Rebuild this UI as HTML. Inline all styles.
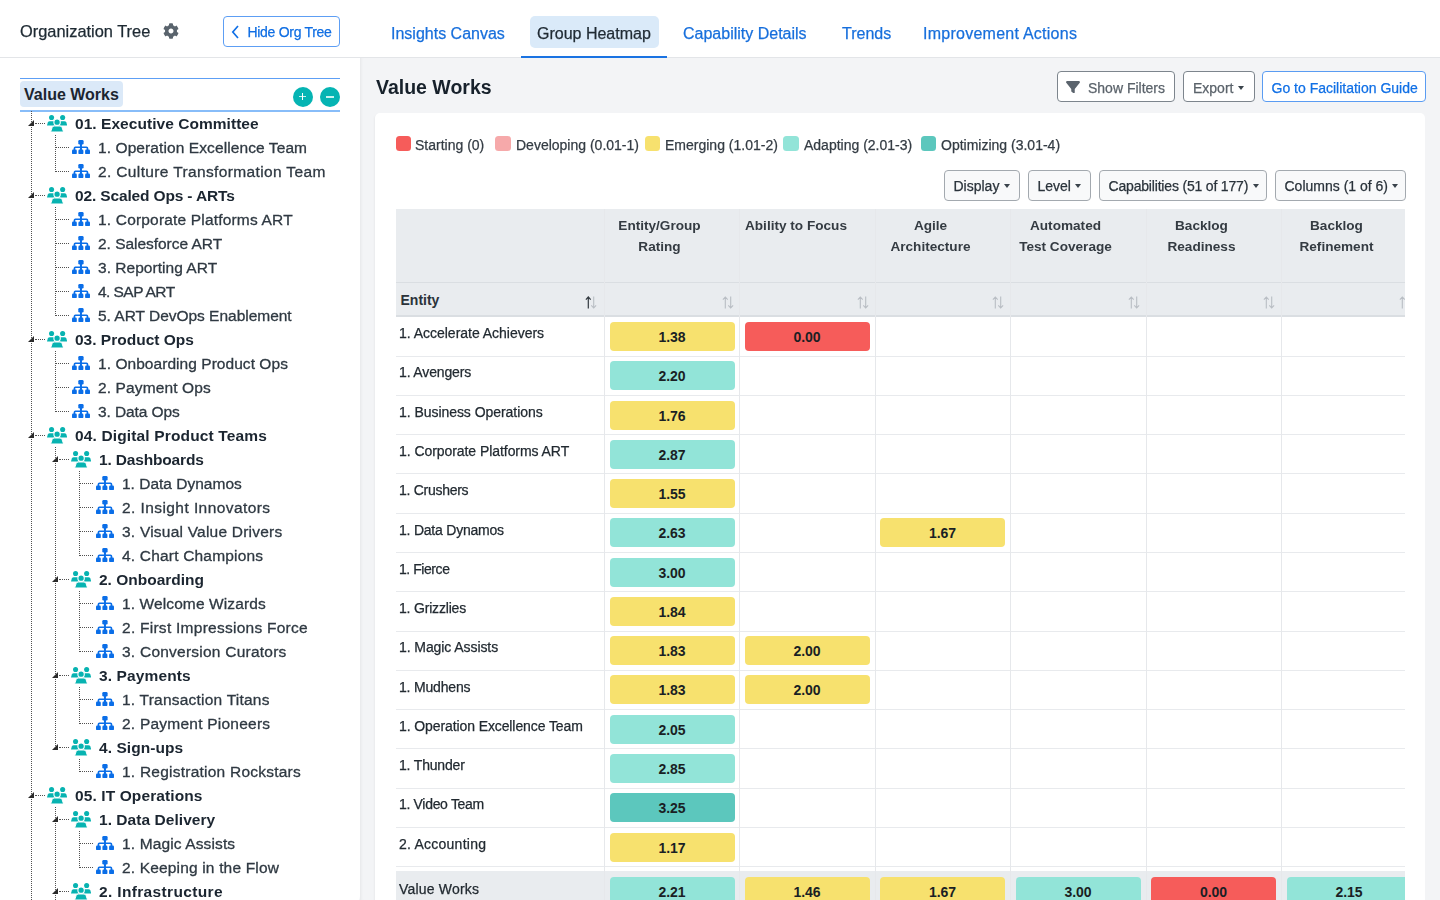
<!DOCTYPE html>
<html><head><meta charset="utf-8"><style>
*{box-sizing:border-box;margin:0;padding:0}
html,body{width:1440px;height:900px;overflow:hidden;background:#f3f4f6;font-family:"Liberation Sans", sans-serif;}
.abs{position:absolute}
#side{position:absolute;left:0;top:0;width:360px;height:903px;background:#fff;border-bottom-right-radius:7px;overflow:hidden}
#nav{position:absolute;left:360px;top:0;width:1080px;height:58px;background:#fff;border-bottom:1px solid #e3e5e8}
#sidehdr{position:absolute;left:0;top:0;width:360px;height:58px;border-bottom:1px solid #e3e5e8}
.ot{position:absolute;-webkit-text-stroke-width:0.25px;will-change:transform;left:20px;top:21px;font-size:16.4px;line-height:20px;color:#1e2a33;white-space:nowrap}
.hidebtn{position:absolute;will-change:transform;-webkit-text-stroke-width:0.25px;left:223px;top:16px;width:117px;height:30.5px;border:1px solid #5d9ef4;border-radius:4px;color:#0f6ee3;font-size:14px;letter-spacing:-0.3px;line-height:30px;padding-left:23.5px;white-space:nowrap}
.vl{position:absolute;width:1px;border-left:1px dotted #505050}
.hl{position:absolute;height:1px;border-top:1px dotted #505050}
.tri{position:absolute;width:0;height:0;border-left:6px solid transparent;border-bottom:6px solid #2a2a2a}
.icon{position:absolute;line-height:0}
.tt{position:absolute;white-space:nowrap;line-height:24px;will-change:transform}
.tt.b{font-weight:700;font-size:15.5px;color:#1b2530}
.tt.r{font-weight:400;font-size:15.5px;color:#2f3942;-webkit-text-stroke-width:0.3px}
.tab{position:absolute;-webkit-text-stroke-width:0.25px;will-change:transform;top:17.5px;height:31px;line-height:31px;font-size:16px;color:#176fdc;white-space:nowrap}
#main{position:absolute;left:360px;top:58px;width:1080px;height:842px;background:#f3f4f6;box-shadow:inset 3px 0 3px -2px rgba(0,0,0,0.06)}
.h1{position:absolute;will-change:transform;left:375.5px;top:75px;font-size:19.5px;font-weight:700;color:#17212b;line-height:24px;white-space:nowrap}
.btn{position:absolute;will-change:transform;-webkit-text-stroke-width:0.25px;height:31px;border:1px solid #7d858d;border-radius:4px;background:#fff;color:#5b636b;font-size:14px;line-height:32px;white-space:nowrap}
.btn2{position:absolute;will-change:transform;-webkit-text-stroke-width:0.25px;top:170px;height:30.5px;border:1px solid #a3a9af;border-radius:4px;background:#f8f9fa;color:#2a333b;font-size:14px;line-height:31.5px;white-space:nowrap;padding-left:8.5px}
.caret{display:inline-block;width:0;height:0;border-left:3.6px solid transparent;border-right:3.6px solid transparent;border-top:4.2px solid #3a434b;vertical-align:3px;margin-left:4.5px}
#card{position:absolute;left:375px;top:113.3px;width:1050px;height:800px;background:#fff;border-radius:5px;box-shadow:-1px 1px 2px rgba(0,0,0,0.04)}
.sw{position:absolute;top:135.5px;width:15.5px;height:15.5px;border-radius:3.5px}
.lg{position:absolute;-webkit-text-stroke-width:0.25px;will-change:transform;top:135px;font-size:14px;line-height:20px;color:#343c44;white-space:nowrap}
#tbl{position:absolute;left:395.5px;top:209px;width:1009.5px;height:691px;overflow:hidden;background:#fff}
.hbg{position:absolute;left:0;top:0;width:1100px;height:108px;background:#e9ecef}
.hb1{position:absolute;left:0;top:73px;width:1100px;height:1.2px;background:#dadee2}
.hb2{position:absolute;left:0;top:106px;width:1100px;height:2px;background:#dadee2}
.trow{position:absolute;left:0;width:1100px;border-bottom:1px solid #e8eaed}
.frow{position:absolute;left:0;width:1100px;height:40px;background:#e9ecef}
.cl{position:absolute;top:0;width:1px;height:700px;background:#e6e8eb}
.ent{position:absolute;-webkit-text-stroke-width:0.25px;will-change:transform;left:3.8px;font-size:14px;line-height:20px;color:#222a31;white-space:nowrap}
.badge{position:absolute;width:125px;height:29px;border-radius:4px;text-align:center;font-weight:700;font-size:14px;line-height:30px;color:#1a1f24}
.badge.y{background:#f7e16e} .badge.r{background:#f65c5a} .badge.t{background:#92e4d8} .badge.d{background:#5cc7bd} .badge.p{background:#f6a9aa}
.hd{position:absolute;will-change:transform;top:6px;width:99px;white-space:nowrap;text-align:center;font-weight:700;font-size:13.6px;line-height:21px;color:#343b42}
.sort{position:absolute;top:87px;line-height:0}
</style></head><body>
<div id="main"></div>
<div id="nav"></div>
<div id="side">
 <div id="sidehdr"></div>
 <div class="ot">Organization Tree</div>
 <div class="abs" style="left:163px;top:22.8px;line-height:0"><svg width="16" height="16" viewBox="0 0 512 512"><path fill="#5a646d" d="M487.4 315.7l-42.6-24.6c4.3-23.2 4.3-47 0-70.2l42.6-24.6c4.9-2.8 7.1-8.6 5.5-14-11.1-35.6-30-67.8-54.7-94.6-3.8-4.1-10-5.1-14.8-2.3L380.8 110c-17.9-15.4-38.5-27.3-60.8-35.1V25.8c0-5.6-3.9-10.5-9.4-11.7-36.7-8.2-74.3-7.8-109.2 0-5.5 1.2-9.4 6.1-9.4 11.7V75c-22.2 7.9-42.8 19.8-60.8 35.1L88.7 85.5c-4.9-2.8-11-1.9-14.8 2.3-24.7 26.7-43.6 58.9-54.7 94.6-1.7 5.4.6 11.2 5.5 14L67.3 221c-4.3 23.2-4.3 47 0 70.2l-42.6 24.6c-4.9 2.8-7.1 8.6-5.5 14 11.1 35.6 30 67.8 54.7 94.6 3.8 4.1 10 5.1 14.8 2.3l42.6-24.6c17.9 15.4 38.5 27.3 60.8 35.1v49.2c0 5.6 3.9 10.5 9.4 11.7 36.7 8.2 74.3 7.8 109.2 0 5.5-1.2 9.4-6.1 9.4-11.7v-49.2c22.2-7.9 42.8-19.8 60.8-35.1l42.6 24.6c4.9 2.8 11 1.9 14.8-2.3 24.7-26.7 43.6-58.9 54.7-94.6 1.5-5.5-.7-11.3-5.6-14.1zM256 336c-44.1 0-80-35.9-80-80s35.9-80 80-80 80 35.9 80 80-35.9 80-80 80z"/></svg></div>
 <div class="hidebtn"><svg class="abs" style="left:7px;top:8px" width="9" height="14" viewBox="0 0 9 14"><path d="M7 1 L1.8 7 L7 13" stroke="#1170e6" stroke-width="1.7" fill="none"/></svg>Hide Org Tree</div>
 <div class="abs" style="left:20px;top:77.5px;width:320px;height:1.5px;background:#5d9ff5"></div>
 <div class="abs" style="left:20px;top:110px;width:320px;height:1.6px;background:#88bdf9"></div>
 <div class="abs" style="left:20px;top:81px;width:103px;height:26px;background:#dbe9f8;border-radius:4px"></div>
 <div class="abs" style="left:24px;top:83px;font-size:16px;font-weight:700;line-height:24px;color:#1b2530;white-space:nowrap">Value Works</div>
 <div class="abs" style="left:292.7px;top:86.5px;width:20px;height:20px;border-radius:50%;background:#05b4b3"><div class="abs" style="left:6.2px;top:9.1px;width:7px;height:1.5px;background:#c8f2ef"></div><div class="abs" style="left:9.5px;top:6.7px;width:1.3px;height:6.6px;background:#fff"></div></div>
 <div class="abs" style="left:320px;top:86.5px;width:20px;height:20px;border-radius:50%;background:#05b4b3"><div class="abs" style="left:6.3px;top:9.2px;width:7.4px;height:2px;background:#c8f2ef"></div></div>
<div class="vl" style="left:55px;top:135.0px;height:37.0px"></div>
<div class="vl" style="left:55px;top:207.0px;height:109.0px"></div>
<div class="vl" style="left:55px;top:351.0px;height:61.0px"></div>
<div class="vl" style="left:55px;top:447.0px;height:301.0px"></div>
<div class="vl" style="left:79px;top:471.0px;height:85.0px"></div>
<div class="vl" style="left:79px;top:591.0px;height:61.0px"></div>
<div class="vl" style="left:79px;top:687.0px;height:37.0px"></div>
<div class="vl" style="left:79px;top:759.0px;height:13.0px"></div>
<div class="vl" style="left:55px;top:807.0px;height:133.0px"></div>
<div class="vl" style="left:79px;top:831.0px;height:37.0px"></div>
<div class="vl" style="left:79px;top:903.0px;height:13.0px"></div>
<div class="vl" style="left:79px;top:951.0px;height:13.0px"></div>
<div class="vl" style="left:31px;top:111px;height:789px"></div>
<div class="tri" style="left:28px;top:120.0px"></div>
<div class="hl" style="left:34.5px;top:123.0px;width:10.0px"></div>
<div class="icon" style="left:46.9px;top:115.2px"><svg class="ti" width="20.2" height="16.5" viewBox="0 0 20.2 16.5"><g fill="#07b3b1"><circle cx="4.56" cy="2.55" r="2.55"/><circle cx="15.65" cy="2.55" r="2.55"/><path d="M0 10.4 L0.8 7.6 Q1.3 6.2 2.8 6.2 H6.2 Q7.4 6.2 7.8 7.4 L8.6 10.4Z"/><path d="M11.6 10.4 L12.4 7.4 Q12.8 6.2 14 6.2 H17.4 Q18.9 6.2 19.4 7.6 L20.2 10.4Z"/></g><g fill="#07b3b1" stroke="#fff" stroke-width="1.1"><circle cx="10.1" cy="7.2" r="3.2"/></g><path fill="#07b3b1" stroke="#fff" stroke-width="1" d="M3.6 17 L5.1 12.6 Q5.6 11 7.2 11 H13 Q14.6 11 15.1 12.6 L16.6 17Z"/></svg></div>
<div class="tt b" style="left:74.5px;top:111.5px;letter-spacing:0.045px">01. Executive Committee</div>
<div class="hl" style="left:56px;top:147.0px;width:12.5px"></div>
<div class="icon" style="left:72px;top:140.3px"><svg class="oi" width="18" height="14.2" viewBox="0 0 18 14.2"><g fill="#0a6ee8"><rect x="6.3" y="0" width="5.3" height="4.6" rx="1.3"/><rect x="7.95" y="3.5" width="2" height="7"/><path d="M1.6 10 V8.2 Q1.6 6.4 3.4 6.4 H14.5 Q16.3 6.4 16.3 8.2 V10 H14.7 V8.6 Q14.7 8 14.1 8 H3.8 Q3.2 8 3.2 8.6 V10Z"/><rect x="0" y="9.6" width="4.8" height="4.6" rx="1.3"/><rect x="6.4" y="9.6" width="5" height="4.6" rx="1.3"/><rect x="13.1" y="9.6" width="4.9" height="4.6" rx="1.3"/></g></svg></div>
<div class="tt r" style="left:98px;top:135.5px;letter-spacing:0.093px">1. Operation Excellence Team</div>
<div class="hl" style="left:56px;top:171.0px;width:12.5px"></div>
<div class="icon" style="left:72px;top:164.3px"><svg class="oi" width="18" height="14.2" viewBox="0 0 18 14.2"><g fill="#0a6ee8"><rect x="6.3" y="0" width="5.3" height="4.6" rx="1.3"/><rect x="7.95" y="3.5" width="2" height="7"/><path d="M1.6 10 V8.2 Q1.6 6.4 3.4 6.4 H14.5 Q16.3 6.4 16.3 8.2 V10 H14.7 V8.6 Q14.7 8 14.1 8 H3.8 Q3.2 8 3.2 8.6 V10Z"/><rect x="0" y="9.6" width="4.8" height="4.6" rx="1.3"/><rect x="6.4" y="9.6" width="5" height="4.6" rx="1.3"/><rect x="13.1" y="9.6" width="4.9" height="4.6" rx="1.3"/></g></svg></div>
<div class="tt r" style="left:98px;top:159.5px;letter-spacing:0.362px">2. Culture Transformation Team</div>
<div class="tri" style="left:28px;top:192.0px"></div>
<div class="hl" style="left:34.5px;top:195.0px;width:10.0px"></div>
<div class="icon" style="left:46.9px;top:187.2px"><svg class="ti" width="20.2" height="16.5" viewBox="0 0 20.2 16.5"><g fill="#07b3b1"><circle cx="4.56" cy="2.55" r="2.55"/><circle cx="15.65" cy="2.55" r="2.55"/><path d="M0 10.4 L0.8 7.6 Q1.3 6.2 2.8 6.2 H6.2 Q7.4 6.2 7.8 7.4 L8.6 10.4Z"/><path d="M11.6 10.4 L12.4 7.4 Q12.8 6.2 14 6.2 H17.4 Q18.9 6.2 19.4 7.6 L20.2 10.4Z"/></g><g fill="#07b3b1" stroke="#fff" stroke-width="1.1"><circle cx="10.1" cy="7.2" r="3.2"/></g><path fill="#07b3b1" stroke="#fff" stroke-width="1" d="M3.6 17 L5.1 12.6 Q5.6 11 7.2 11 H13 Q14.6 11 15.1 12.6 L16.6 17Z"/></svg></div>
<div class="tt b" style="left:74.5px;top:183.5px;letter-spacing:-0.15px">02. Scaled Ops - ARTs</div>
<div class="hl" style="left:56px;top:219.0px;width:12.5px"></div>
<div class="icon" style="left:72px;top:212.3px"><svg class="oi" width="18" height="14.2" viewBox="0 0 18 14.2"><g fill="#0a6ee8"><rect x="6.3" y="0" width="5.3" height="4.6" rx="1.3"/><rect x="7.95" y="3.5" width="2" height="7"/><path d="M1.6 10 V8.2 Q1.6 6.4 3.4 6.4 H14.5 Q16.3 6.4 16.3 8.2 V10 H14.7 V8.6 Q14.7 8 14.1 8 H3.8 Q3.2 8 3.2 8.6 V10Z"/><rect x="0" y="9.6" width="4.8" height="4.6" rx="1.3"/><rect x="6.4" y="9.6" width="5" height="4.6" rx="1.3"/><rect x="13.1" y="9.6" width="4.9" height="4.6" rx="1.3"/></g></svg></div>
<div class="tt r" style="left:98px;top:207.5px;letter-spacing:0.18px">1. Corporate Platforms ART</div>
<div class="hl" style="left:56px;top:243.0px;width:12.5px"></div>
<div class="icon" style="left:72px;top:236.3px"><svg class="oi" width="18" height="14.2" viewBox="0 0 18 14.2"><g fill="#0a6ee8"><rect x="6.3" y="0" width="5.3" height="4.6" rx="1.3"/><rect x="7.95" y="3.5" width="2" height="7"/><path d="M1.6 10 V8.2 Q1.6 6.4 3.4 6.4 H14.5 Q16.3 6.4 16.3 8.2 V10 H14.7 V8.6 Q14.7 8 14.1 8 H3.8 Q3.2 8 3.2 8.6 V10Z"/><rect x="0" y="9.6" width="4.8" height="4.6" rx="1.3"/><rect x="6.4" y="9.6" width="5" height="4.6" rx="1.3"/><rect x="13.1" y="9.6" width="4.9" height="4.6" rx="1.3"/></g></svg></div>
<div class="tt r" style="left:98px;top:231.5px;letter-spacing:-0.031px">2. Salesforce ART</div>
<div class="hl" style="left:56px;top:267.0px;width:12.5px"></div>
<div class="icon" style="left:72px;top:260.3px"><svg class="oi" width="18" height="14.2" viewBox="0 0 18 14.2"><g fill="#0a6ee8"><rect x="6.3" y="0" width="5.3" height="4.6" rx="1.3"/><rect x="7.95" y="3.5" width="2" height="7"/><path d="M1.6 10 V8.2 Q1.6 6.4 3.4 6.4 H14.5 Q16.3 6.4 16.3 8.2 V10 H14.7 V8.6 Q14.7 8 14.1 8 H3.8 Q3.2 8 3.2 8.6 V10Z"/><rect x="0" y="9.6" width="4.8" height="4.6" rx="1.3"/><rect x="6.4" y="9.6" width="5" height="4.6" rx="1.3"/><rect x="13.1" y="9.6" width="4.9" height="4.6" rx="1.3"/></g></svg></div>
<div class="tt r" style="left:98px;top:255.5px;letter-spacing:0.033px">3. Reporting ART</div>
<div class="hl" style="left:56px;top:291.0px;width:12.5px"></div>
<div class="icon" style="left:72px;top:284.3px"><svg class="oi" width="18" height="14.2" viewBox="0 0 18 14.2"><g fill="#0a6ee8"><rect x="6.3" y="0" width="5.3" height="4.6" rx="1.3"/><rect x="7.95" y="3.5" width="2" height="7"/><path d="M1.6 10 V8.2 Q1.6 6.4 3.4 6.4 H14.5 Q16.3 6.4 16.3 8.2 V10 H14.7 V8.6 Q14.7 8 14.1 8 H3.8 Q3.2 8 3.2 8.6 V10Z"/><rect x="0" y="9.6" width="4.8" height="4.6" rx="1.3"/><rect x="6.4" y="9.6" width="5" height="4.6" rx="1.3"/><rect x="13.1" y="9.6" width="4.9" height="4.6" rx="1.3"/></g></svg></div>
<div class="tt r" style="left:98px;top:279.5px;letter-spacing:-0.556px">4. SAP ART</div>
<div class="hl" style="left:56px;top:315.0px;width:12.5px"></div>
<div class="icon" style="left:72px;top:308.3px"><svg class="oi" width="18" height="14.2" viewBox="0 0 18 14.2"><g fill="#0a6ee8"><rect x="6.3" y="0" width="5.3" height="4.6" rx="1.3"/><rect x="7.95" y="3.5" width="2" height="7"/><path d="M1.6 10 V8.2 Q1.6 6.4 3.4 6.4 H14.5 Q16.3 6.4 16.3 8.2 V10 H14.7 V8.6 Q14.7 8 14.1 8 H3.8 Q3.2 8 3.2 8.6 V10Z"/><rect x="0" y="9.6" width="4.8" height="4.6" rx="1.3"/><rect x="6.4" y="9.6" width="5" height="4.6" rx="1.3"/><rect x="13.1" y="9.6" width="4.9" height="4.6" rx="1.3"/></g></svg></div>
<div class="tt r" style="left:98px;top:303.5px;letter-spacing:-0.022px">5. ART DevOps Enablement</div>
<div class="tri" style="left:28px;top:336.0px"></div>
<div class="hl" style="left:34.5px;top:339.0px;width:10.0px"></div>
<div class="icon" style="left:46.9px;top:331.2px"><svg class="ti" width="20.2" height="16.5" viewBox="0 0 20.2 16.5"><g fill="#07b3b1"><circle cx="4.56" cy="2.55" r="2.55"/><circle cx="15.65" cy="2.55" r="2.55"/><path d="M0 10.4 L0.8 7.6 Q1.3 6.2 2.8 6.2 H6.2 Q7.4 6.2 7.8 7.4 L8.6 10.4Z"/><path d="M11.6 10.4 L12.4 7.4 Q12.8 6.2 14 6.2 H17.4 Q18.9 6.2 19.4 7.6 L20.2 10.4Z"/></g><g fill="#07b3b1" stroke="#fff" stroke-width="1.1"><circle cx="10.1" cy="7.2" r="3.2"/></g><path fill="#07b3b1" stroke="#fff" stroke-width="1" d="M3.6 17 L5.1 12.6 Q5.6 11 7.2 11 H13 Q14.6 11 15.1 12.6 L16.6 17Z"/></svg></div>
<div class="tt b" style="left:74.5px;top:327.5px;letter-spacing:0.0px">03. Product Ops</div>
<div class="hl" style="left:56px;top:363.0px;width:12.5px"></div>
<div class="icon" style="left:72px;top:356.3px"><svg class="oi" width="18" height="14.2" viewBox="0 0 18 14.2"><g fill="#0a6ee8"><rect x="6.3" y="0" width="5.3" height="4.6" rx="1.3"/><rect x="7.95" y="3.5" width="2" height="7"/><path d="M1.6 10 V8.2 Q1.6 6.4 3.4 6.4 H14.5 Q16.3 6.4 16.3 8.2 V10 H14.7 V8.6 Q14.7 8 14.1 8 H3.8 Q3.2 8 3.2 8.6 V10Z"/><rect x="0" y="9.6" width="4.8" height="4.6" rx="1.3"/><rect x="6.4" y="9.6" width="5" height="4.6" rx="1.3"/><rect x="13.1" y="9.6" width="4.9" height="4.6" rx="1.3"/></g></svg></div>
<div class="tt r" style="left:98px;top:351.5px;letter-spacing:0.05px">1. Onboarding Product Ops</div>
<div class="hl" style="left:56px;top:387.0px;width:12.5px"></div>
<div class="icon" style="left:72px;top:380.3px"><svg class="oi" width="18" height="14.2" viewBox="0 0 18 14.2"><g fill="#0a6ee8"><rect x="6.3" y="0" width="5.3" height="4.6" rx="1.3"/><rect x="7.95" y="3.5" width="2" height="7"/><path d="M1.6 10 V8.2 Q1.6 6.4 3.4 6.4 H14.5 Q16.3 6.4 16.3 8.2 V10 H14.7 V8.6 Q14.7 8 14.1 8 H3.8 Q3.2 8 3.2 8.6 V10Z"/><rect x="0" y="9.6" width="4.8" height="4.6" rx="1.3"/><rect x="6.4" y="9.6" width="5" height="4.6" rx="1.3"/><rect x="13.1" y="9.6" width="4.9" height="4.6" rx="1.3"/></g></svg></div>
<div class="tt r" style="left:98px;top:375.5px;letter-spacing:0.115px">2. Payment Ops</div>
<div class="hl" style="left:56px;top:411.0px;width:12.5px"></div>
<div class="icon" style="left:72px;top:404.3px"><svg class="oi" width="18" height="14.2" viewBox="0 0 18 14.2"><g fill="#0a6ee8"><rect x="6.3" y="0" width="5.3" height="4.6" rx="1.3"/><rect x="7.95" y="3.5" width="2" height="7"/><path d="M1.6 10 V8.2 Q1.6 6.4 3.4 6.4 H14.5 Q16.3 6.4 16.3 8.2 V10 H14.7 V8.6 Q14.7 8 14.1 8 H3.8 Q3.2 8 3.2 8.6 V10Z"/><rect x="0" y="9.6" width="4.8" height="4.6" rx="1.3"/><rect x="6.4" y="9.6" width="5" height="4.6" rx="1.3"/><rect x="13.1" y="9.6" width="4.9" height="4.6" rx="1.3"/></g></svg></div>
<div class="tt r" style="left:98px;top:399.5px;letter-spacing:-0.1px">3. Data Ops</div>
<div class="tri" style="left:28px;top:432.0px"></div>
<div class="hl" style="left:34.5px;top:435.0px;width:10.0px"></div>
<div class="icon" style="left:46.9px;top:427.2px"><svg class="ti" width="20.2" height="16.5" viewBox="0 0 20.2 16.5"><g fill="#07b3b1"><circle cx="4.56" cy="2.55" r="2.55"/><circle cx="15.65" cy="2.55" r="2.55"/><path d="M0 10.4 L0.8 7.6 Q1.3 6.2 2.8 6.2 H6.2 Q7.4 6.2 7.8 7.4 L8.6 10.4Z"/><path d="M11.6 10.4 L12.4 7.4 Q12.8 6.2 14 6.2 H17.4 Q18.9 6.2 19.4 7.6 L20.2 10.4Z"/></g><g fill="#07b3b1" stroke="#fff" stroke-width="1.1"><circle cx="10.1" cy="7.2" r="3.2"/></g><path fill="#07b3b1" stroke="#fff" stroke-width="1" d="M3.6 17 L5.1 12.6 Q5.6 11 7.2 11 H13 Q14.6 11 15.1 12.6 L16.6 17Z"/></svg></div>
<div class="tt b" style="left:74.5px;top:423.5px;letter-spacing:0.146px">04. Digital Product Teams</div>
<div class="tri" style="left:52px;top:456.0px"></div>
<div class="hl" style="left:58.5px;top:459.0px;width:10.0px"></div>
<div class="icon" style="left:70.9px;top:451.2px"><svg class="ti" width="20.2" height="16.5" viewBox="0 0 20.2 16.5"><g fill="#07b3b1"><circle cx="4.56" cy="2.55" r="2.55"/><circle cx="15.65" cy="2.55" r="2.55"/><path d="M0 10.4 L0.8 7.6 Q1.3 6.2 2.8 6.2 H6.2 Q7.4 6.2 7.8 7.4 L8.6 10.4Z"/><path d="M11.6 10.4 L12.4 7.4 Q12.8 6.2 14 6.2 H17.4 Q18.9 6.2 19.4 7.6 L20.2 10.4Z"/></g><g fill="#07b3b1" stroke="#fff" stroke-width="1.1"><circle cx="10.1" cy="7.2" r="3.2"/></g><path fill="#07b3b1" stroke="#fff" stroke-width="1" d="M3.6 17 L5.1 12.6 Q5.6 11 7.2 11 H13 Q14.6 11 15.1 12.6 L16.6 17Z"/></svg></div>
<div class="tt b" style="left:98.5px;top:447.5px;letter-spacing:-0.167px">1. Dashboards</div>
<div class="hl" style="left:80px;top:483.0px;width:12.5px"></div>
<div class="icon" style="left:96px;top:476.3px"><svg class="oi" width="18" height="14.2" viewBox="0 0 18 14.2"><g fill="#0a6ee8"><rect x="6.3" y="0" width="5.3" height="4.6" rx="1.3"/><rect x="7.95" y="3.5" width="2" height="7"/><path d="M1.6 10 V8.2 Q1.6 6.4 3.4 6.4 H14.5 Q16.3 6.4 16.3 8.2 V10 H14.7 V8.6 Q14.7 8 14.1 8 H3.8 Q3.2 8 3.2 8.6 V10Z"/><rect x="0" y="9.6" width="4.8" height="4.6" rx="1.3"/><rect x="6.4" y="9.6" width="5" height="4.6" rx="1.3"/><rect x="13.1" y="9.6" width="4.9" height="4.6" rx="1.3"/></g></svg></div>
<div class="tt r" style="left:122px;top:471.5px;letter-spacing:0.0px">1. Data Dynamos</div>
<div class="hl" style="left:80px;top:507.0px;width:12.5px"></div>
<div class="icon" style="left:96px;top:500.3px"><svg class="oi" width="18" height="14.2" viewBox="0 0 18 14.2"><g fill="#0a6ee8"><rect x="6.3" y="0" width="5.3" height="4.6" rx="1.3"/><rect x="7.95" y="3.5" width="2" height="7"/><path d="M1.6 10 V8.2 Q1.6 6.4 3.4 6.4 H14.5 Q16.3 6.4 16.3 8.2 V10 H14.7 V8.6 Q14.7 8 14.1 8 H3.8 Q3.2 8 3.2 8.6 V10Z"/><rect x="0" y="9.6" width="4.8" height="4.6" rx="1.3"/><rect x="6.4" y="9.6" width="5" height="4.6" rx="1.3"/><rect x="13.1" y="9.6" width="4.9" height="4.6" rx="1.3"/></g></svg></div>
<div class="tt r" style="left:122px;top:495.5px;letter-spacing:0.425px">2. Insight Innovators</div>
<div class="hl" style="left:80px;top:531.0px;width:12.5px"></div>
<div class="icon" style="left:96px;top:524.3px"><svg class="oi" width="18" height="14.2" viewBox="0 0 18 14.2"><g fill="#0a6ee8"><rect x="6.3" y="0" width="5.3" height="4.6" rx="1.3"/><rect x="7.95" y="3.5" width="2" height="7"/><path d="M1.6 10 V8.2 Q1.6 6.4 3.4 6.4 H14.5 Q16.3 6.4 16.3 8.2 V10 H14.7 V8.6 Q14.7 8 14.1 8 H3.8 Q3.2 8 3.2 8.6 V10Z"/><rect x="0" y="9.6" width="4.8" height="4.6" rx="1.3"/><rect x="6.4" y="9.6" width="5" height="4.6" rx="1.3"/><rect x="13.1" y="9.6" width="4.9" height="4.6" rx="1.3"/></g></svg></div>
<div class="tt r" style="left:122px;top:519.5px;letter-spacing:0.218px">3. Visual Value Drivers</div>
<div class="hl" style="left:80px;top:555.0px;width:12.5px"></div>
<div class="icon" style="left:96px;top:548.3px"><svg class="oi" width="18" height="14.2" viewBox="0 0 18 14.2"><g fill="#0a6ee8"><rect x="6.3" y="0" width="5.3" height="4.6" rx="1.3"/><rect x="7.95" y="3.5" width="2" height="7"/><path d="M1.6 10 V8.2 Q1.6 6.4 3.4 6.4 H14.5 Q16.3 6.4 16.3 8.2 V10 H14.7 V8.6 Q14.7 8 14.1 8 H3.8 Q3.2 8 3.2 8.6 V10Z"/><rect x="0" y="9.6" width="4.8" height="4.6" rx="1.3"/><rect x="6.4" y="9.6" width="5" height="4.6" rx="1.3"/><rect x="13.1" y="9.6" width="4.9" height="4.6" rx="1.3"/></g></svg></div>
<div class="tt r" style="left:122px;top:543.5px;letter-spacing:0.188px">4. Chart Champions</div>
<div class="tri" style="left:52px;top:576.0px"></div>
<div class="hl" style="left:58.5px;top:579.0px;width:10.0px"></div>
<div class="icon" style="left:70.9px;top:571.2px"><svg class="ti" width="20.2" height="16.5" viewBox="0 0 20.2 16.5"><g fill="#07b3b1"><circle cx="4.56" cy="2.55" r="2.55"/><circle cx="15.65" cy="2.55" r="2.55"/><path d="M0 10.4 L0.8 7.6 Q1.3 6.2 2.8 6.2 H6.2 Q7.4 6.2 7.8 7.4 L8.6 10.4Z"/><path d="M11.6 10.4 L12.4 7.4 Q12.8 6.2 14 6.2 H17.4 Q18.9 6.2 19.4 7.6 L20.2 10.4Z"/></g><g fill="#07b3b1" stroke="#fff" stroke-width="1.1"><circle cx="10.1" cy="7.2" r="3.2"/></g><path fill="#07b3b1" stroke="#fff" stroke-width="1" d="M3.6 17 L5.1 12.6 Q5.6 11 7.2 11 H13 Q14.6 11 15.1 12.6 L16.6 17Z"/></svg></div>
<div class="tt b" style="left:98.5px;top:567.5px;letter-spacing:0.0px">2. Onboarding</div>
<div class="hl" style="left:80px;top:603.0px;width:12.5px"></div>
<div class="icon" style="left:96px;top:596.3px"><svg class="oi" width="18" height="14.2" viewBox="0 0 18 14.2"><g fill="#0a6ee8"><rect x="6.3" y="0" width="5.3" height="4.6" rx="1.3"/><rect x="7.95" y="3.5" width="2" height="7"/><path d="M1.6 10 V8.2 Q1.6 6.4 3.4 6.4 H14.5 Q16.3 6.4 16.3 8.2 V10 H14.7 V8.6 Q14.7 8 14.1 8 H3.8 Q3.2 8 3.2 8.6 V10Z"/><rect x="0" y="9.6" width="4.8" height="4.6" rx="1.3"/><rect x="6.4" y="9.6" width="5" height="4.6" rx="1.3"/><rect x="13.1" y="9.6" width="4.9" height="4.6" rx="1.3"/></g></svg></div>
<div class="tt r" style="left:122px;top:591.5px;letter-spacing:0.106px">1. Welcome Wizards</div>
<div class="hl" style="left:80px;top:627.0px;width:12.5px"></div>
<div class="icon" style="left:96px;top:620.3px"><svg class="oi" width="18" height="14.2" viewBox="0 0 18 14.2"><g fill="#0a6ee8"><rect x="6.3" y="0" width="5.3" height="4.6" rx="1.3"/><rect x="7.95" y="3.5" width="2" height="7"/><path d="M1.6 10 V8.2 Q1.6 6.4 3.4 6.4 H14.5 Q16.3 6.4 16.3 8.2 V10 H14.7 V8.6 Q14.7 8 14.1 8 H3.8 Q3.2 8 3.2 8.6 V10Z"/><rect x="0" y="9.6" width="4.8" height="4.6" rx="1.3"/><rect x="6.4" y="9.6" width="5" height="4.6" rx="1.3"/><rect x="13.1" y="9.6" width="4.9" height="4.6" rx="1.3"/></g></svg></div>
<div class="tt r" style="left:122px;top:615.5px;letter-spacing:0.26px">2. First Impressions Force</div>
<div class="hl" style="left:80px;top:651.0px;width:12.5px"></div>
<div class="icon" style="left:96px;top:644.3px"><svg class="oi" width="18" height="14.2" viewBox="0 0 18 14.2"><g fill="#0a6ee8"><rect x="6.3" y="0" width="5.3" height="4.6" rx="1.3"/><rect x="7.95" y="3.5" width="2" height="7"/><path d="M1.6 10 V8.2 Q1.6 6.4 3.4 6.4 H14.5 Q16.3 6.4 16.3 8.2 V10 H14.7 V8.6 Q14.7 8 14.1 8 H3.8 Q3.2 8 3.2 8.6 V10Z"/><rect x="0" y="9.6" width="4.8" height="4.6" rx="1.3"/><rect x="6.4" y="9.6" width="5" height="4.6" rx="1.3"/><rect x="13.1" y="9.6" width="4.9" height="4.6" rx="1.3"/></g></svg></div>
<div class="tt r" style="left:122px;top:639.5px;letter-spacing:0.238px">3. Conversion Curators</div>
<div class="tri" style="left:52px;top:672.0px"></div>
<div class="hl" style="left:58.5px;top:675.0px;width:10.0px"></div>
<div class="icon" style="left:70.9px;top:667.2px"><svg class="ti" width="20.2" height="16.5" viewBox="0 0 20.2 16.5"><g fill="#07b3b1"><circle cx="4.56" cy="2.55" r="2.55"/><circle cx="15.65" cy="2.55" r="2.55"/><path d="M0 10.4 L0.8 7.6 Q1.3 6.2 2.8 6.2 H6.2 Q7.4 6.2 7.8 7.4 L8.6 10.4Z"/><path d="M11.6 10.4 L12.4 7.4 Q12.8 6.2 14 6.2 H17.4 Q18.9 6.2 19.4 7.6 L20.2 10.4Z"/></g><g fill="#07b3b1" stroke="#fff" stroke-width="1.1"><circle cx="10.1" cy="7.2" r="3.2"/></g><path fill="#07b3b1" stroke="#fff" stroke-width="1" d="M3.6 17 L5.1 12.6 Q5.6 11 7.2 11 H13 Q14.6 11 15.1 12.6 L16.6 17Z"/></svg></div>
<div class="tt b" style="left:98.5px;top:663.5px;letter-spacing:0.12px">3. Payments</div>
<div class="hl" style="left:80px;top:699.0px;width:12.5px"></div>
<div class="icon" style="left:96px;top:692.3px"><svg class="oi" width="18" height="14.2" viewBox="0 0 18 14.2"><g fill="#0a6ee8"><rect x="6.3" y="0" width="5.3" height="4.6" rx="1.3"/><rect x="7.95" y="3.5" width="2" height="7"/><path d="M1.6 10 V8.2 Q1.6 6.4 3.4 6.4 H14.5 Q16.3 6.4 16.3 8.2 V10 H14.7 V8.6 Q14.7 8 14.1 8 H3.8 Q3.2 8 3.2 8.6 V10Z"/><rect x="0" y="9.6" width="4.8" height="4.6" rx="1.3"/><rect x="6.4" y="9.6" width="5" height="4.6" rx="1.3"/><rect x="13.1" y="9.6" width="4.9" height="4.6" rx="1.3"/></g></svg></div>
<div class="tt r" style="left:122px;top:687.5px;letter-spacing:0.22px">1. Transaction Titans</div>
<div class="hl" style="left:80px;top:723.0px;width:12.5px"></div>
<div class="icon" style="left:96px;top:716.3px"><svg class="oi" width="18" height="14.2" viewBox="0 0 18 14.2"><g fill="#0a6ee8"><rect x="6.3" y="0" width="5.3" height="4.6" rx="1.3"/><rect x="7.95" y="3.5" width="2" height="7"/><path d="M1.6 10 V8.2 Q1.6 6.4 3.4 6.4 H14.5 Q16.3 6.4 16.3 8.2 V10 H14.7 V8.6 Q14.7 8 14.1 8 H3.8 Q3.2 8 3.2 8.6 V10Z"/><rect x="0" y="9.6" width="4.8" height="4.6" rx="1.3"/><rect x="6.4" y="9.6" width="5" height="4.6" rx="1.3"/><rect x="13.1" y="9.6" width="4.9" height="4.6" rx="1.3"/></g></svg></div>
<div class="tt r" style="left:122px;top:711.5px;letter-spacing:0.233px">2. Payment Pioneers</div>
<div class="tri" style="left:52px;top:744.0px"></div>
<div class="hl" style="left:58.5px;top:747.0px;width:10.0px"></div>
<div class="icon" style="left:70.9px;top:739.2px"><svg class="ti" width="20.2" height="16.5" viewBox="0 0 20.2 16.5"><g fill="#07b3b1"><circle cx="4.56" cy="2.55" r="2.55"/><circle cx="15.65" cy="2.55" r="2.55"/><path d="M0 10.4 L0.8 7.6 Q1.3 6.2 2.8 6.2 H6.2 Q7.4 6.2 7.8 7.4 L8.6 10.4Z"/><path d="M11.6 10.4 L12.4 7.4 Q12.8 6.2 14 6.2 H17.4 Q18.9 6.2 19.4 7.6 L20.2 10.4Z"/></g><g fill="#07b3b1" stroke="#fff" stroke-width="1.1"><circle cx="10.1" cy="7.2" r="3.2"/></g><path fill="#07b3b1" stroke="#fff" stroke-width="1" d="M3.6 17 L5.1 12.6 Q5.6 11 7.2 11 H13 Q14.6 11 15.1 12.6 L16.6 17Z"/></svg></div>
<div class="tt b" style="left:98.5px;top:735.5px;letter-spacing:0.07px">4. Sign-ups</div>
<div class="hl" style="left:80px;top:771.0px;width:12.5px"></div>
<div class="icon" style="left:96px;top:764.3px"><svg class="oi" width="18" height="14.2" viewBox="0 0 18 14.2"><g fill="#0a6ee8"><rect x="6.3" y="0" width="5.3" height="4.6" rx="1.3"/><rect x="7.95" y="3.5" width="2" height="7"/><path d="M1.6 10 V8.2 Q1.6 6.4 3.4 6.4 H14.5 Q16.3 6.4 16.3 8.2 V10 H14.7 V8.6 Q14.7 8 14.1 8 H3.8 Q3.2 8 3.2 8.6 V10Z"/><rect x="0" y="9.6" width="4.8" height="4.6" rx="1.3"/><rect x="6.4" y="9.6" width="5" height="4.6" rx="1.3"/><rect x="13.1" y="9.6" width="4.9" height="4.6" rx="1.3"/></g></svg></div>
<div class="tt r" style="left:122px;top:759.5px;letter-spacing:0.233px">1. Registration Rockstars</div>
<div class="tri" style="left:28px;top:792.0px"></div>
<div class="hl" style="left:34.5px;top:795.0px;width:10.0px"></div>
<div class="icon" style="left:46.9px;top:787.2px"><svg class="ti" width="20.2" height="16.5" viewBox="0 0 20.2 16.5"><g fill="#07b3b1"><circle cx="4.56" cy="2.55" r="2.55"/><circle cx="15.65" cy="2.55" r="2.55"/><path d="M0 10.4 L0.8 7.6 Q1.3 6.2 2.8 6.2 H6.2 Q7.4 6.2 7.8 7.4 L8.6 10.4Z"/><path d="M11.6 10.4 L12.4 7.4 Q12.8 6.2 14 6.2 H17.4 Q18.9 6.2 19.4 7.6 L20.2 10.4Z"/></g><g fill="#07b3b1" stroke="#fff" stroke-width="1.1"><circle cx="10.1" cy="7.2" r="3.2"/></g><path fill="#07b3b1" stroke="#fff" stroke-width="1" d="M3.6 17 L5.1 12.6 Q5.6 11 7.2 11 H13 Q14.6 11 15.1 12.6 L16.6 17Z"/></svg></div>
<div class="tt b" style="left:74.5px;top:783.5px;letter-spacing:0.106px">05. IT Operations</div>
<div class="tri" style="left:52px;top:816.0px"></div>
<div class="hl" style="left:58.5px;top:819.0px;width:10.0px"></div>
<div class="icon" style="left:70.9px;top:811.2px"><svg class="ti" width="20.2" height="16.5" viewBox="0 0 20.2 16.5"><g fill="#07b3b1"><circle cx="4.56" cy="2.55" r="2.55"/><circle cx="15.65" cy="2.55" r="2.55"/><path d="M0 10.4 L0.8 7.6 Q1.3 6.2 2.8 6.2 H6.2 Q7.4 6.2 7.8 7.4 L8.6 10.4Z"/><path d="M11.6 10.4 L12.4 7.4 Q12.8 6.2 14 6.2 H17.4 Q18.9 6.2 19.4 7.6 L20.2 10.4Z"/></g><g fill="#07b3b1" stroke="#fff" stroke-width="1.1"><circle cx="10.1" cy="7.2" r="3.2"/></g><path fill="#07b3b1" stroke="#fff" stroke-width="1" d="M3.6 17 L5.1 12.6 Q5.6 11 7.2 11 H13 Q14.6 11 15.1 12.6 L16.6 17Z"/></svg></div>
<div class="tt b" style="left:98.5px;top:807.5px;letter-spacing:0.047px">1. Data Delivery</div>
<div class="hl" style="left:80px;top:843.0px;width:12.5px"></div>
<div class="icon" style="left:96px;top:836.3px"><svg class="oi" width="18" height="14.2" viewBox="0 0 18 14.2"><g fill="#0a6ee8"><rect x="6.3" y="0" width="5.3" height="4.6" rx="1.3"/><rect x="7.95" y="3.5" width="2" height="7"/><path d="M1.6 10 V8.2 Q1.6 6.4 3.4 6.4 H14.5 Q16.3 6.4 16.3 8.2 V10 H14.7 V8.6 Q14.7 8 14.1 8 H3.8 Q3.2 8 3.2 8.6 V10Z"/><rect x="0" y="9.6" width="4.8" height="4.6" rx="1.3"/><rect x="6.4" y="9.6" width="5" height="4.6" rx="1.3"/><rect x="13.1" y="9.6" width="4.9" height="4.6" rx="1.3"/></g></svg></div>
<div class="tt r" style="left:122px;top:831.5px;letter-spacing:0.133px">1. Magic Assists</div>
<div class="hl" style="left:80px;top:867.0px;width:12.5px"></div>
<div class="icon" style="left:96px;top:860.3px"><svg class="oi" width="18" height="14.2" viewBox="0 0 18 14.2"><g fill="#0a6ee8"><rect x="6.3" y="0" width="5.3" height="4.6" rx="1.3"/><rect x="7.95" y="3.5" width="2" height="7"/><path d="M1.6 10 V8.2 Q1.6 6.4 3.4 6.4 H14.5 Q16.3 6.4 16.3 8.2 V10 H14.7 V8.6 Q14.7 8 14.1 8 H3.8 Q3.2 8 3.2 8.6 V10Z"/><rect x="0" y="9.6" width="4.8" height="4.6" rx="1.3"/><rect x="6.4" y="9.6" width="5" height="4.6" rx="1.3"/><rect x="13.1" y="9.6" width="4.9" height="4.6" rx="1.3"/></g></svg></div>
<div class="tt r" style="left:122px;top:855.5px;letter-spacing:0.167px">2. Keeping in the Flow</div>
<div class="tri" style="left:52px;top:888.0px"></div>
<div class="hl" style="left:58.5px;top:891.0px;width:10.0px"></div>
<div class="icon" style="left:70.9px;top:883.2px"><svg class="ti" width="20.2" height="16.5" viewBox="0 0 20.2 16.5"><g fill="#07b3b1"><circle cx="4.56" cy="2.55" r="2.55"/><circle cx="15.65" cy="2.55" r="2.55"/><path d="M0 10.4 L0.8 7.6 Q1.3 6.2 2.8 6.2 H6.2 Q7.4 6.2 7.8 7.4 L8.6 10.4Z"/><path d="M11.6 10.4 L12.4 7.4 Q12.8 6.2 14 6.2 H17.4 Q18.9 6.2 19.4 7.6 L20.2 10.4Z"/></g><g fill="#07b3b1" stroke="#fff" stroke-width="1.1"><circle cx="10.1" cy="7.2" r="3.2"/></g><path fill="#07b3b1" stroke="#fff" stroke-width="1" d="M3.6 17 L5.1 12.6 Q5.6 11 7.2 11 H13 Q14.6 11 15.1 12.6 L16.6 17Z"/></svg></div>
<div class="tt b" style="left:98.5px;top:879.5px;letter-spacing:0.344px">2. Infrastructure</div>
<div class="hl" style="left:80px;top:915.0px;width:12.5px"></div>
<div class="icon" style="left:96px;top:908.3px"><svg class="oi" width="18" height="14.2" viewBox="0 0 18 14.2"><g fill="#0a6ee8"><rect x="6.3" y="0" width="5.3" height="4.6" rx="1.3"/><rect x="7.95" y="3.5" width="2" height="7"/><path d="M1.6 10 V8.2 Q1.6 6.4 3.4 6.4 H14.5 Q16.3 6.4 16.3 8.2 V10 H14.7 V8.6 Q14.7 8 14.1 8 H3.8 Q3.2 8 3.2 8.6 V10Z"/><rect x="0" y="9.6" width="4.8" height="4.6" rx="1.3"/><rect x="6.4" y="9.6" width="5" height="4.6" rx="1.3"/><rect x="13.1" y="9.6" width="4.9" height="4.6" rx="1.3"/></g></svg></div>
<div class="tt r" style="left:122px;top:903.5px;letter-spacing:0px">1. Servers</div>
<div class="tri" style="left:52px;top:936.0px"></div>
<div class="hl" style="left:58.5px;top:939.0px;width:10.0px"></div>
<div class="icon" style="left:70.9px;top:931.2px"><svg class="ti" width="20.2" height="16.5" viewBox="0 0 20.2 16.5"><g fill="#07b3b1"><circle cx="4.56" cy="2.55" r="2.55"/><circle cx="15.65" cy="2.55" r="2.55"/><path d="M0 10.4 L0.8 7.6 Q1.3 6.2 2.8 6.2 H6.2 Q7.4 6.2 7.8 7.4 L8.6 10.4Z"/><path d="M11.6 10.4 L12.4 7.4 Q12.8 6.2 14 6.2 H17.4 Q18.9 6.2 19.4 7.6 L20.2 10.4Z"/></g><g fill="#07b3b1" stroke="#fff" stroke-width="1.1"><circle cx="10.1" cy="7.2" r="3.2"/></g><path fill="#07b3b1" stroke="#fff" stroke-width="1" d="M3.6 17 L5.1 12.6 Q5.6 11 7.2 11 H13 Q14.6 11 15.1 12.6 L16.6 17Z"/></svg></div>
<div class="tt b" style="left:98.5px;top:927.5px;letter-spacing:0px">3. Security</div>
<div class="hl" style="left:80px;top:963.0px;width:12.5px"></div>
<div class="icon" style="left:96px;top:956.3px"><svg class="oi" width="18" height="14.2" viewBox="0 0 18 14.2"><g fill="#0a6ee8"><rect x="6.3" y="0" width="5.3" height="4.6" rx="1.3"/><rect x="7.95" y="3.5" width="2" height="7"/><path d="M1.6 10 V8.2 Q1.6 6.4 3.4 6.4 H14.5 Q16.3 6.4 16.3 8.2 V10 H14.7 V8.6 Q14.7 8 14.1 8 H3.8 Q3.2 8 3.2 8.6 V10Z"/><rect x="0" y="9.6" width="4.8" height="4.6" rx="1.3"/><rect x="6.4" y="9.6" width="5" height="4.6" rx="1.3"/><rect x="13.1" y="9.6" width="4.9" height="4.6" rx="1.3"/></g></svg></div>
<div class="tt r" style="left:122px;top:951.5px;letter-spacing:0px">1. Network Ninjas</div>
<div class="tri" style="left:28px;top:984.0px"></div>
<div class="hl" style="left:34.5px;top:987.0px;width:10.0px"></div>
<div class="icon" style="left:46.9px;top:979.2px"><svg class="ti" width="20.2" height="16.5" viewBox="0 0 20.2 16.5"><g fill="#07b3b1"><circle cx="4.56" cy="2.55" r="2.55"/><circle cx="15.65" cy="2.55" r="2.55"/><path d="M0 10.4 L0.8 7.6 Q1.3 6.2 2.8 6.2 H6.2 Q7.4 6.2 7.8 7.4 L8.6 10.4Z"/><path d="M11.6 10.4 L12.4 7.4 Q12.8 6.2 14 6.2 H17.4 Q18.9 6.2 19.4 7.6 L20.2 10.4Z"/></g><g fill="#07b3b1" stroke="#fff" stroke-width="1.1"><circle cx="10.1" cy="7.2" r="3.2"/></g><path fill="#07b3b1" stroke="#fff" stroke-width="1" d="M3.6 17 L5.1 12.6 Q5.6 11 7.2 11 H13 Q14.6 11 15.1 12.6 L16.6 17Z"/></svg></div>
<div class="tt b" style="left:74.5px;top:975.5px;letter-spacing:0px">06. Finance</div>
</div>
<div class="tab" style="left:390.5px">Insights Canvas</div>
<div class="abs" style="left:530px;top:16px;width:128.5px;height:31.5px;background:#daeaf9;border-radius:5px"></div>
<div class="tab" style="left:537px;color:#1f2a33">Group Heatmap</div>
<div class="abs" style="left:521px;top:55.8px;width:146px;height:2.4px;background:#1a73e2"></div>
<div class="tab" style="left:682.5px">Capability Details</div>
<div class="tab" style="left:841.5px">Trends</div>
<div class="tab" style="left:922.5px;letter-spacing:0.25px">Improvement Actions</div>

<div class="h1">Value Works</div>
<div class="btn" style="left:1057px;top:70.5px;width:118px;padding-left:30px"><svg class="abs" style="left:8px;top:8.5px" width="14" height="12.25" viewBox="0 32 512 448"><path fill="#5b646d" d="M3.9 54.9C10.5 40.9 24.5 32 40 32H472c15.5 0 29.5 8.9 36.1 22.9s4.6 30.5-5.2 42.5L320 320.9V448c0 12.1-6.8 23.2-17.7 28.6s-23.8 4.3-33.5-3l-64-48c-8.1-6-12.8-15.5-12.8-25.6V320.9L9 97.3C-.7 85.4-2.8 68.8 3.9 54.9z"/></svg>Show Filters</div>
<div class="btn" style="left:1182.5px;top:70.5px;width:71.5px;padding-left:9px">Export<span class="caret"></span></div>
<div class="btn" style="left:1262px;top:70.5px;width:163.5px;padding-left:8.5px;border-color:#5a9cf2;color:#1170e6">Go to Facilitation Guide</div>

<div id="card"></div>
<div class="sw" style="left:395.5px;background:#f65c5a"></div><div class="lg" style="left:415.4px">Starting (0)</div>
<div class="sw" style="left:495px;background:#f6a9aa"></div><div class="lg" style="left:516px">Developing (0.01-1)</div>
<div class="sw" style="left:644.6px;background:#f7e16e"></div><div class="lg" style="left:665.4px">Emerging (1.01-2)</div>
<div class="sw" style="left:783.3px;background:#92e4d8"></div><div class="lg" style="left:803.6px">Adapting (2.01-3)</div>
<div class="sw" style="left:920.7px;background:#5cc7bd"></div><div class="lg" style="left:940.7px">Optimizing (3.01-4)</div>

<div class="btn2" style="left:944px;width:76px">Display<span class="caret"></span></div>
<div class="btn2" style="left:1028px;width:62.5px">Level<span class="caret"></span></div>
<div class="btn2" style="left:1098.5px;width:167.5px;letter-spacing:-0.18px">Capabilities (51 of 177)<span class="caret"></span></div>
<div class="btn2" style="left:1274.7px;width:130.6px">Columns (1 of 6)<span class="caret"></span></div>

<div id="tbl">
<div class="hbg"></div><div class="hb1"></div><div class="hb2"></div>
<div class="abs" style="left:5px;top:81px;font-size:14px;font-weight:700;line-height:20px;color:#2b333a">Entity</div>
<div class="sort" style="left:189.5px"><svg width="12" height="13" viewBox="0 0 12 13"><path d="M3.3 12.5 V1.2 M0.9 3.6 L3.3 1 L5.7 3.6" stroke="#333a40" stroke-width="1.2" fill="none"/><path d="M8.7 0.5 V11.8 M6.3 9.4 L8.7 12 L11.1 9.4" stroke="#b9bec4" stroke-width="1.1" fill="none"/></svg></div>
<div class="trow" style="top:108.40px;height:39.27px"></div>
<div class="ent" style="top:114.20px;letter-spacing:-0.02px">1. Accelerate Achievers</div>
<div class="badge y" style="left:214.00px;top:113.00px">1.38</div>
<div class="badge r" style="left:349.00px;top:113.00px">0.00</div>
<div class="trow" style="top:147.67px;height:39.27px"></div>
<div class="ent" style="top:153.47px;letter-spacing:-0.14px">1. Avengers</div>
<div class="badge t" style="left:214.00px;top:152.27px">2.20</div>
<div class="trow" style="top:186.94px;height:39.27px"></div>
<div class="ent" style="top:192.74px;letter-spacing:-0.05px">1. Business Operations</div>
<div class="badge y" style="left:214.00px;top:191.54px">1.76</div>
<div class="trow" style="top:226.21px;height:39.27px"></div>
<div class="ent" style="top:232.01px;letter-spacing:-0.06px">1. Corporate Platforms ART</div>
<div class="badge t" style="left:214.00px;top:230.81px">2.87</div>
<div class="trow" style="top:265.48px;height:39.27px"></div>
<div class="ent" style="top:271.28px;letter-spacing:-0.28px">1. Crushers</div>
<div class="badge y" style="left:214.00px;top:270.08px">1.55</div>
<div class="trow" style="top:304.75px;height:39.27px"></div>
<div class="ent" style="top:310.55px;letter-spacing:-0.22px">1. Data Dynamos</div>
<div class="badge t" style="left:214.00px;top:309.35px">2.63</div>
<div class="badge y" style="left:484.50px;top:309.35px">1.67</div>
<div class="trow" style="top:344.02px;height:39.27px"></div>
<div class="ent" style="top:349.82px;letter-spacing:-0.44px">1. Fierce</div>
<div class="badge t" style="left:214.00px;top:348.62px">3.00</div>
<div class="trow" style="top:383.29px;height:39.27px"></div>
<div class="ent" style="top:389.09px;letter-spacing:-0.19px">1. Grizzlies</div>
<div class="badge y" style="left:214.00px;top:387.89px">1.84</div>
<div class="trow" style="top:422.56px;height:39.27px"></div>
<div class="ent" style="top:428.36px;letter-spacing:-0.08px">1. Magic Assists</div>
<div class="badge y" style="left:214.00px;top:427.16px">1.83</div>
<div class="badge y" style="left:349.00px;top:427.16px">2.00</div>
<div class="trow" style="top:461.83px;height:39.27px"></div>
<div class="ent" style="top:467.63px;letter-spacing:-0.18px">1. Mudhens</div>
<div class="badge y" style="left:214.00px;top:466.43px">1.83</div>
<div class="badge y" style="left:349.00px;top:466.43px">2.00</div>
<div class="trow" style="top:501.10px;height:39.27px"></div>
<div class="ent" style="top:506.90px;letter-spacing:-0.1px">1. Operation Excellence Team</div>
<div class="badge t" style="left:214.00px;top:505.70px">2.05</div>
<div class="trow" style="top:540.37px;height:39.27px"></div>
<div class="ent" style="top:546.17px;letter-spacing:-0.18px">1. Thunder</div>
<div class="badge t" style="left:214.00px;top:544.97px">2.85</div>
<div class="trow" style="top:579.64px;height:39.27px"></div>
<div class="ent" style="top:585.44px;letter-spacing:-0.32px">1. Video Team</div>
<div class="badge d" style="left:214.00px;top:584.24px">3.25</div>
<div class="trow" style="top:618.91px;height:39.27px"></div>
<div class="ent" style="top:624.71px;letter-spacing:0.24px">2. Accounting</div>
<div class="badge y" style="left:214.00px;top:623.51px">1.17</div>
<div class="frow" style="top:662px"></div>
<div class="ent" style="top:669.50px;letter-spacing:0.2px">Value Works</div>
<div class="badge t" style="left:214.00px;top:667.50px">2.21</div>
<div class="badge y" style="left:349.00px;top:667.50px">1.46</div>
<div class="badge y" style="left:484.50px;top:667.50px">1.67</div>
<div class="badge t" style="left:620.00px;top:667.50px">3.00</div>
<div class="badge r" style="left:755.50px;top:667.50px">0.00</div>
<div class="badge t" style="left:891.00px;top:667.50px">2.15</div>
<div class="cl" style="left:208.50px"></div>
<div class="cl" style="left:343.50px"></div>
<div class="cl" style="left:479.00px"></div>
<div class="cl" style="left:614.50px"></div>
<div class="cl" style="left:750.00px"></div>
<div class="cl" style="left:885.50px"></div>
<div class="hd" style="left:214.50px">Entity/Group<br>Rating</div>
<div class="sort" style="left:326.00px"><svg width="12" height="13" viewBox="0 0 12 13"><path d="M3.3 12.5 V1.2 M0.9 3.6 L3.3 1 L5.7 3.6 M8.7 0.5 V11.8 M6.3 9.4 L8.7 12 L11.1 9.4" stroke="#b9bec4" stroke-width="1.1" fill="none"/></svg></div>
<div class="hd" style="left:349.50px">Ability to Focus<br></div>
<div class="sort" style="left:461.00px"><svg width="12" height="13" viewBox="0 0 12 13"><path d="M3.3 12.5 V1.2 M0.9 3.6 L3.3 1 L5.7 3.6 M8.7 0.5 V11.8 M6.3 9.4 L8.7 12 L11.1 9.4" stroke="#b9bec4" stroke-width="1.1" fill="none"/></svg></div>
<div class="hd" style="left:485.00px">Agile<br>Architecture</div>
<div class="sort" style="left:596.50px"><svg width="12" height="13" viewBox="0 0 12 13"><path d="M3.3 12.5 V1.2 M0.9 3.6 L3.3 1 L5.7 3.6 M8.7 0.5 V11.8 M6.3 9.4 L8.7 12 L11.1 9.4" stroke="#b9bec4" stroke-width="1.1" fill="none"/></svg></div>
<div class="hd" style="left:620.50px">Automated<br>Test Coverage</div>
<div class="sort" style="left:732.00px"><svg width="12" height="13" viewBox="0 0 12 13"><path d="M3.3 12.5 V1.2 M0.9 3.6 L3.3 1 L5.7 3.6 M8.7 0.5 V11.8 M6.3 9.4 L8.7 12 L11.1 9.4" stroke="#b9bec4" stroke-width="1.1" fill="none"/></svg></div>
<div class="hd" style="left:756.00px">Backlog<br>Readiness</div>
<div class="sort" style="left:867.50px"><svg width="12" height="13" viewBox="0 0 12 13"><path d="M3.3 12.5 V1.2 M0.9 3.6 L3.3 1 L5.7 3.6 M8.7 0.5 V11.8 M6.3 9.4 L8.7 12 L11.1 9.4" stroke="#b9bec4" stroke-width="1.1" fill="none"/></svg></div>
<div class="hd" style="left:891.50px">Backlog<br>Refinement</div>
<div class="sort" style="left:1003.00px"><svg width="12" height="13" viewBox="0 0 12 13"><path d="M3.3 12.5 V1.2 M0.9 3.6 L3.3 1 L5.7 3.6 M8.7 0.5 V11.8 M6.3 9.4 L8.7 12 L11.1 9.4" stroke="#b9bec4" stroke-width="1.1" fill="none"/></svg></div>
</div>
</body></html>
